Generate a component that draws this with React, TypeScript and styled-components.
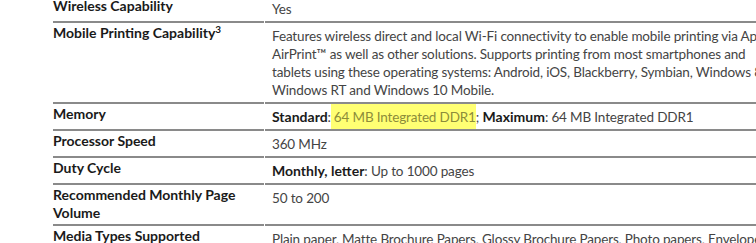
import React from 'react';
import styled, { createGlobalStyle } from 'styled-components';

interface Spec {
  label: React.ReactNode;
  value: React.ReactNode;
}

const GlobalStyle = createGlobalStyle`
  html, body {
    margin: 0;
    padding: 0;
    background: #fff;
    overflow: hidden;
  }
  body {
    font-family: Lato, "Open Sans", sans-serif;
  }
`;

const Page = styled.div`
  width: 756px;
  height: 243px;
  overflow: hidden;
`;

const SpecTable = styled.div`
  display: grid;
  grid-template-columns: 211px 620px;
  column-gap: 1px;
  margin: -4px 0 0 53px;
`;

const LabelCell = styled.div`
  padding: 1px 0 2px 0;
  border-bottom: 2px solid #8a8a8a;
  font-size: 14px;
  line-height: 18px;
  font-weight: 700;
  color: #1a1a1a;
`;

const ValueCell = styled.div`
  padding: 4px 0 3px 7px;
  border-bottom: 2px solid #8a8a8a;
  font-size: 13.5px;
  letter-spacing: -0.15px;
  line-height: 18px;
  color: #444;
  white-space: nowrap;
`;

const Strong = styled.b`
  font-size: 14px;
  letter-spacing: 0;
  font-weight: 700;
  color: #1a1a1a;
`;

const Sup = styled.sup`
  font-size: 10px;
  line-height: 0;
  vertical-align: 5px;
`;

const Highlight = styled.span`
  display: inline-block;
  background: #ffff73;
  color: #8c8c3a;
  padding: 4px 0 3px 3px;
  margin: -4px 0 -3px 0;
`;

const specs: Spec[] = [
  { label: 'Wireless Capability', value: 'Yes' },
  {
    label: (
      <>
        Mobile Printing Capability<Sup>3</Sup>
      </>
    ),
    value: (
      <>
        Features wireless direct and local Wi-Fi connectivity to enable mobile printing via Apple
        <br />
        AirPrint™ as well as other solutions. Supports printing from most smartphones and
        <br />
        tablets using these operating systems: Android, iOS, Blackberry, Symbian, Windows 8,
        <br />
        Windows RT and Windows 10 Mobile.
      </>
    ),
  },
  {
    label: 'Memory',
    value: (
      <>
        <Strong>Standard</Strong>:<Highlight>64 MB Integrated DDR1</Highlight>; <Strong>Maximum</Strong>: 64 MB Integrated DDR1
      </>
    ),
  },
  { label: 'Processor Speed', value: '360 MHz' },
  {
    label: 'Duty Cycle',
    value: (
      <>
        <Strong>Monthly, letter</Strong>: Up to 1000 pages
      </>
    ),
  },
  {
    label: (
      <>
        Recommended Monthly Page
        <br />
        Volume
      </>
    ),
    value: '50 to 200',
  },
  {
    label: 'Media Types Supported',
    value: 'Plain paper, Matte Brochure Papers, Glossy Brochure Papers, Photo papers, Envelopes, Other specialty inkjet papers',
  },
];

const App: React.FC = () => {
  return (
    <Page>
      <GlobalStyle />
      <SpecTable>
        {specs.map((spec, i) => (
          <React.Fragment key={i}>
            <LabelCell>{spec.label}</LabelCell>
            <ValueCell>{spec.value}</ValueCell>
          </React.Fragment>
        ))}
      </SpecTable>
    </Page>
  );
};

export default App;
